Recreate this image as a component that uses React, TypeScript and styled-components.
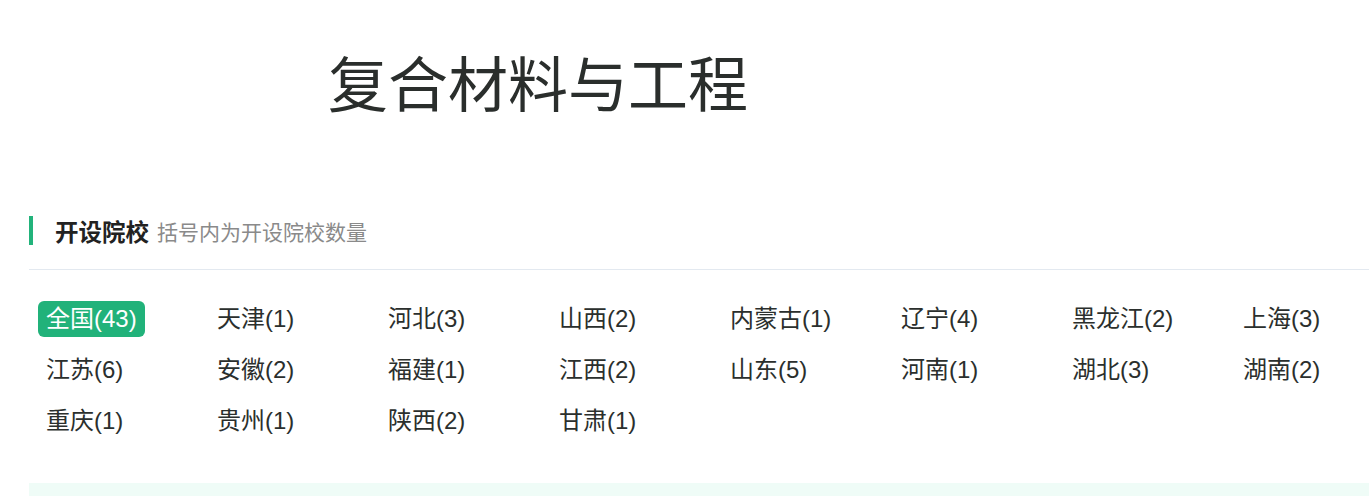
import React from "react";
import styled, { createGlobalStyle } from "styled-components";

const GlobalStyle = createGlobalStyle`
  html, body {
    margin: 0;
    padding: 0;
    background: #ffffff;
    overflow: hidden;
  }
  body {
    font-family: "Liberation Sans", "Noto Sans CJK SC", sans-serif;
    color: #2b2f2d;
  }
`;

const Page = styled.div`
  padding-left: 29px;
  width: 1340px;
`;

const Title = styled.h1`
  margin: 0;
  padding: 37px 0 0 299px;
  height: 216px;
  box-sizing: border-box;
  font-size: 60px;
  font-weight: 400;
  line-height: 100px;
  color: #2a2e2c;
`;

const SectionHead = styled.div`
  display: flex;
  align-items: center;
  height: 29px;
  border-left: 4px solid #22b37b;
  padding-left: 22px;
  gap: 8px;
`;

const HeadTitle = styled.span`
  font-size: 23.5px;
  font-weight: 700;
  color: #222;
`;

const HeadNote = styled.span`
  font-size: 21px;
  color: #8a8a8a;
`;

const Divider = styled.div`
  margin-top: 24px;
  height: 1px;
  background: #e3e9f0;
`;

const Grid = styled.ul`
  list-style: none;
  margin: 0;
  padding: 31px 0 0 9px;
  display: grid;
  grid-template-columns: repeat(8, 171px);
  align-content: start;
  row-gap: 15px;
  height: 213px;
  box-sizing: border-box;
`;

const Item = styled.li<{ $active?: boolean }>`
  justify-self: start;
  height: 36px;
  line-height: 36px;
  padding: 0 8px;
  border-radius: 6px;
  font-size: 24px;
  white-space: nowrap;
  color: ${(p) => (p.$active ? "#ffffff" : "#2b2f2d")};
  background: ${(p) => (p.$active ? "#21b27a" : "transparent")};
`;

const Band = styled.div`
  height: 13px;
  background: #effcf7;
`;

const provinces: [string, number][] = [
  ["全国", 43],
  ["天津", 1],
  ["河北", 3],
  ["山西", 2],
  ["内蒙古", 1],
  ["辽宁", 4],
  ["黑龙江", 2],
  ["上海", 3],
  ["江苏", 6],
  ["安徽", 2],
  ["福建", 1],
  ["江西", 2],
  ["山东", 5],
  ["河南", 1],
  ["湖北", 3],
  ["湖南", 2],
  ["重庆", 1],
  ["贵州", 1],
  ["陕西", 2],
  ["甘肃", 1],
];

export default function App() {
  return (
    <>
      <GlobalStyle />
      <Page>
        <Title>复合材料与工程</Title>
        <SectionHead>
          <HeadTitle>开设院校</HeadTitle>
          <HeadNote>括号内为开设院校数量</HeadNote>
        </SectionHead>
        <Divider />
        <Grid>
          {provinces.map(([name, count], i) => (
            <Item key={name} $active={i === 0}>
              {name}({count})
            </Item>
          ))}
        </Grid>
        <Band />
      </Page>
    </>
  );
}
